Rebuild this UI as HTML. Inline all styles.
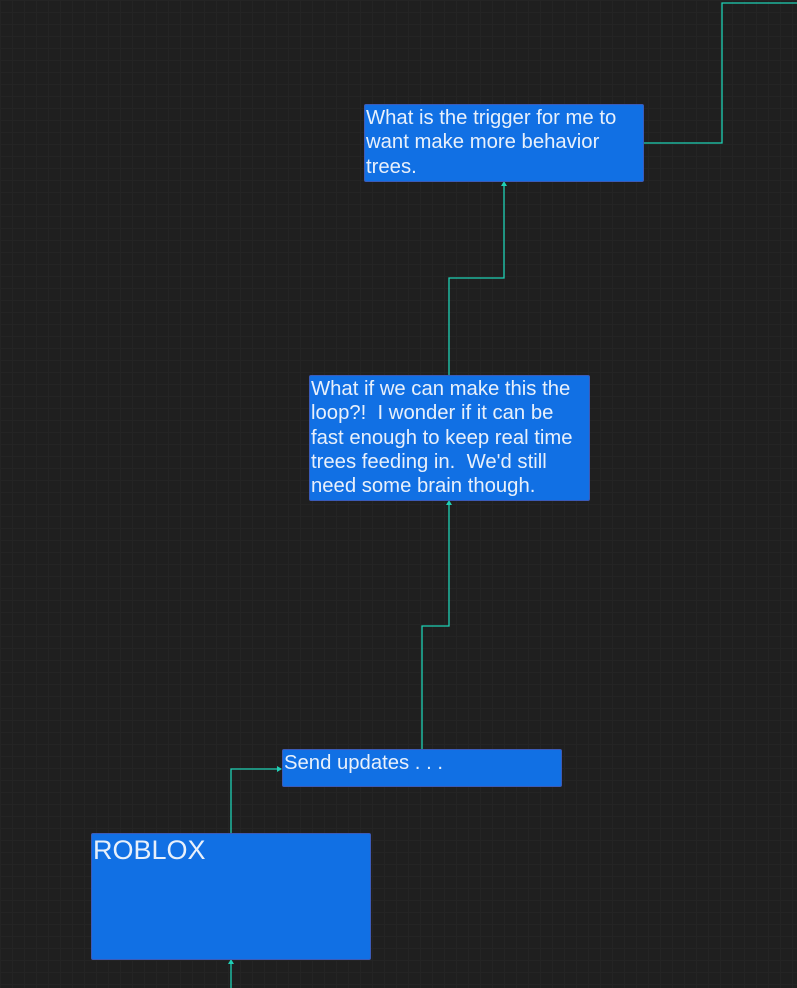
<!DOCTYPE html>
<html><head><style>
html,body{margin:0;padding:0}
body{width:797px;height:988px;overflow:hidden;position:relative;background-color:#1f1f1f;
background-image:linear-gradient(#242424 1px,transparent 1px),linear-gradient(90deg,#242424 1px,transparent 1px);background-size:12px 12px;
font-family:"Liberation Sans",sans-serif;}
.b{position:absolute;background:#1170e4;border:1px solid #3b5bb8;box-sizing:border-box;color:#e8f0fb;font-size:20.3px;line-height:24.3px;padding:1px 1px 0;border-radius:2px;white-space:nowrap}
svg{position:absolute;left:0;top:0}
</style></head><body>
<svg width="797" height="988">
<g fill="none" stroke="#1fd0b5" stroke-width="1.3">
<path d="M449 375V278H504V186"/>
<path d="M422 749V626H449V505"/>
<path d="M231 833V769H278"/>
<path d="M231 988V964"/>
<path d="M644 143H722V3H797"/>
</g>
<g fill="#1fd0b5">
<path d="M504 181l-3 5h6z"/>
<path d="M449 500l-3 5h6z"/>
<path d="M282 769l-5 -3v6z"/>
<path d="M231 959l-3 5h6z"/>
</g>
</svg>
<div class="b" style="left:364px;top:104px;width:280px;height:78px">What is the trigger for me to<br>want make more behavior<br>trees.</div>
<div class="b" style="left:309px;top:375px;width:281px;height:126px">What if we can make this the<br>loop?!&nbsp; I wonder if it can be<br>fast enough to keep real time<br>trees feeding in.&nbsp; We'd still<br>need some brain though.</div>
<div class="b" style="left:282px;top:749px;width:280px;height:38px">Send updates . . .</div>
<div class="b" style="left:91px;top:833px;width:280px;height:127px;font-size:27px;line-height:30px">ROBLOX</div>
</body></html>
